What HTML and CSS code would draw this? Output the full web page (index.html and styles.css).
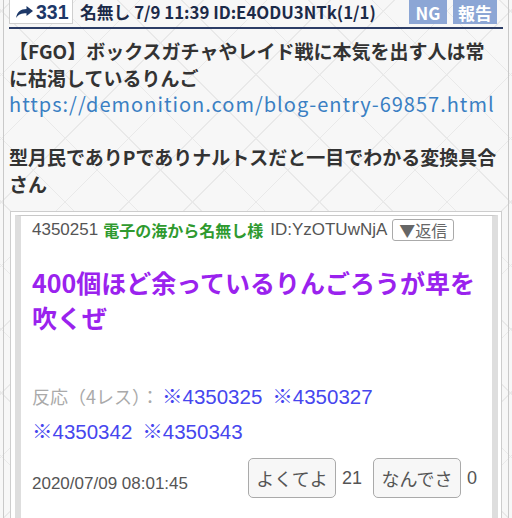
FILE: index.html
```html
<!DOCTYPE html>
<html lang="ja">
<head>
    <meta charset="UTF-8">
    <meta name="viewport" content="width=device-width, initial-scale=1.0">
    <title>名無し 7/9 11:39</title>
    <link rel="stylesheet" href="styles.css">
</head>
<body>
    <div class="thread">
        <div class="res-head">
            <div class="score">
                <svg class="share" width="17" height="12" viewBox="0 0 17 12">
                    <path d="M17 5 L10.5 0 V3 C4.5 3 1 6 0 12 C2.5 8.3 5.5 7.3 10.5 7.3 V10 Z" fill="#1d3868"/>
                </svg>
                <span class="score-num">331</span>
            </div>
            <div class="meta">名無し 7/9 11:39 ID:E4ODU3NTk(1/1)</div>
            <span class="badge badge-ng">NG</span>
            <span class="badge badge-report">報告</span>
        </div>

        <div class="res-body">
            【FGO】ボックスガチャやレイド戦に本気を出す人は常に枯渇しているりんご<br>
            <a href="#" class="link">https://demonition.com/blog-entry-69857.html</a><br>
            <br>
            型月民でありPでありナルトスだと一目でわかる変換具合さん
        </div>

        <div class="shot">
            <div class="shot-inner">
                <div class="post-head">
                    <span class="num">4350251</span>
                    <span class="name">電子の海から名無し様</span>
                    <span class="uid">ID:YzOTUwNjA</span>
                    <span class="reply">▼返信</span>
                </div>
                <div class="post-text">400個ほど余っているりんごろうが卑を吹くぜ</div>
                <div class="reactions">
                    <span class="reac-label">反応（4レス）：</span><span class="anchor">※4350325</span><span class="anchor">※4350327</span><br>
                    <span class="anchor">※4350342</span><span class="anchor">※4350343</span>
                </div>
                <div class="post-foot">
                    <span class="date">2020/07/09 08:01:45</span>
                    <div class="votes">
                        <span class="vote">よくてよ</span><span class="count">21</span>
                        <span class="vote">なんでさ</span><span class="count">0</span>
                    </div>
                </div>
            </div>
        </div>
    </div>
</body>
</html>
```

FILE: styles.css
```css
html, body {
    margin: 0;
    height: 100%;
}
body {
    font-family: "Noto Sans CJK JP", "Noto Sans", sans-serif;
    background-color: #f7f7f7;
    background-image:
        repeating-linear-gradient(45deg, transparent 0 44px, #e9e9e9 44px 45px),
        repeating-linear-gradient(-45deg, transparent 0 44px, #e9e9e9 44px 45px);
    overflow: hidden;
}
.thread {
    margin: 0 3px;
    min-height: 100%;
    border-left: 1px solid #c9c9c9;
    border-right: 1px solid #c9c9c9;
    padding: 0 5px;
}
.res-head {
    display: flex;
    align-items: center;
    height: 24px;
    padding-bottom: 3px;
    border-bottom: 2px solid #2c3d66;
}
.score {
    box-sizing: border-box;
    width: 64px;
    height: 24px;
    background-color: #fff;
    border: 1px solid #cfcfcf;
    border-top: none;
    display: flex;
    align-items: center;
    gap: 3px;
    padding-left: 6px;
    color: #1d3868;
}
.score-num {
    font-family: "Liberation Sans", sans-serif;
    font-size: 19.5px;
    font-weight: bold;
    line-height: 22px;
}
.meta {
    margin-left: 7px;
    font-size: 16.8px;
    font-weight: bold;
    color: #1c2a48;
    white-space: nowrap;
    flex: 1;
}
.badge {
    display: flex;
    align-items: center;
    justify-content: center;
    height: 24px;
    background-color: #8ca6d5;
    color: #fff;
    font-weight: bold;
    font-size: 17px;
}
.badge-ng {
    width: 38px;
}
.badge-report {
    width: 44px;
    margin-left: 6px;
    margin-right: 6px;
}
.res-body {
    padding-top: 9px;
    font-size: 19px;
    line-height: 26.5px;
    font-weight: bold;
    color: #333;
}
.link {
    color: #3a7fc3;
    font-size: 20px;
    letter-spacing: 1px;
    font-weight: normal;
    text-decoration: none;
}
.shot {
    margin: 14px 1px 0 1px;
    background-color: #fff;
    border: 1px solid #cdcdcd;
    border-bottom: none;
    padding: 3px 3px 0 4px;
    font-family: "Liberation Sans", "Noto Sans CJK JP", sans-serif;
}
.shot-inner {
    border-top: 1px solid #c8c8c8;
    border-left: 6px solid #dedede;
    border-right: 6px solid #dedede;
    padding: 2px 15px 30px 11px;
}
.post-head {
    display: flex;
    align-items: center;
    font-size: 17px;
    color: #555;
    white-space: nowrap;
}
.name {
    color: #2f9a2f;
    font-weight: bold;
    font-size: 16px;
    margin: 0 7px 0 5px;
    font-family: "Noto Sans CJK JP", sans-serif;
}
.reply {
    margin-left: 5px;
    border: 1px solid #aaa;
    border-radius: 3px;
    padding: 0 6px;
    height: 20px;
    line-height: 20px;
    color: #666;
    font-size: 16px;
    font-family: "Noto Sans CJK JP", sans-serif;
}
.post-text {
    margin-top: 23px;
    font-family: "Noto Sans CJK JP", sans-serif;
    font-size: 25px;
    line-height: 35px;
    font-weight: bold;
    color: #9a22ee;
}
.reactions {
    margin-top: 44px;
    font-size: 20.5px;
    line-height: 35px;
}
.reac-label {
    color: #aaa;
    font-size: 18px;
    font-family: "Noto Sans CJK JP", sans-serif;
    margin-right: 3px;
}
.anchor {
    color: #4646ee;
    margin-right: 10px;
}
.post-foot {
    margin-top: 9px;
    display: flex;
    align-items: flex-end;
    justify-content: space-between;
}
.date {
    font-size: 17px;
    color: #555;
    padding-bottom: 4px;
}
.votes {
    display: flex;
    align-items: center;
    font-size: 18px;
    color: #555;
}
.vote {
    box-sizing: border-box;
    height: 40px;
    width: 88px;
    display: flex;
    align-items: center;
    justify-content: center;
    border: 1px solid #aaa;
    border-radius: 5px;
    background-color: #f7f7f7;
    font-family: "Noto Sans CJK JP", sans-serif;
    color: #555;
}
.count {
    margin: 0 11px 0 6px;
}
.count:last-child {
    margin-right: 0;
}
```
